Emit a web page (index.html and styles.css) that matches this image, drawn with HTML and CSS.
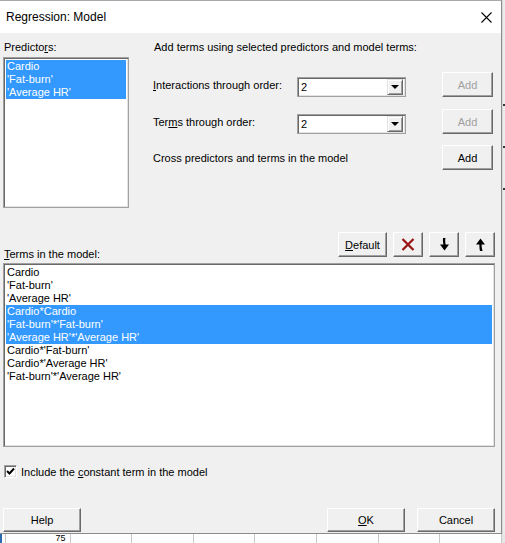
FILE: index.html
```html
<!DOCTYPE html>
<html lang="en">
<head>
    <meta charset="UTF-8">
    <title>Regression: Model</title>
    <link rel="stylesheet" href="styles.css">
</head>
<body>

<div class="screen">
    <div class="dialog">
        <div class="titlebar">
            <span class="title">Regression: Model</span>
            <svg class="close" width="11" height="11" viewBox="0 0 11 11">
                <path d="M0.5 0.5 L10.5 10.5 M10.5 0.5 L0.5 10.5" stroke="#000" stroke-width="1.1" fill="none"/>
            </svg>
        </div>

        <div class="content">
            <div class="top">
                <div class="pred">
                    <div class="caption">Predicto<u>r</u>s:</div>
                    <div class="listbox pred-list">
                        <div class="item selected">Cardio</div>
                        <div class="item selected">'Fat-burn'</div>
                        <div class="item selected">'Average HR'</div>
                    </div>
                </div>

                <div class="panel">
                    <div class="caption">Add terms using selected predictors and model terms:</div>
                    <div class="row row-first">
                        <span class="row-label"><u>I</u>nteractions through order:</span>
                        <div class="combo">
                            <span class="combo-value">2</span>
                            <span class="combo-btn"><i class="tri"></i></span>
                        </div>
                        <button class="btn btn-add" disabled>Add</button>
                    </div>
                    <div class="row row-second">
                        <span class="row-label">Ter<u>m</u>s through order:</span>
                        <div class="combo">
                            <span class="combo-value">2</span>
                            <span class="combo-btn"><i class="tri"></i></span>
                        </div>
                        <button class="btn btn-add" disabled>Add</button>
                    </div>
                    <div class="row row-third">
                        <span class="row-label">Cross predictors and terms in the model</span>
                        <button class="btn btn-add">Add</button>
                    </div>
                </div>
            </div>

            <div class="mid">
                <div class="caption"><u>T</u>erms in the model:</div>
                <div class="tools">
                    <button class="btn btn-default"><u>D</u>efault</button>
                    <button class="btn btn-icon">
                        <svg width="14" height="13" viewBox="0 0 14 13">
                            <path d="M1.5 1 L12.5 12 M12.5 1 L1.5 12" stroke="#9b1212" stroke-width="2.2" fill="none"/>
                        </svg>
                    </button>
                    <button class="btn btn-icon">
                        <svg width="11" height="13" viewBox="0 0 11 13">
                            <path d="M4 0 L6.5 0 C6 2 6.2 4 6.6 6.5 L10 6.5 L5.5 12.5 L1 6.5 L4.4 6.5 C4 4 3.8 2 4 0 Z" fill="#000"/>
                        </svg>
                    </button>
                    <button class="btn btn-icon">
                        <svg width="11" height="13" viewBox="0 0 11 13">
                            <path d="M5.5 0.5 L10 6.5 L6.6 6.5 C6.6 9 7 11 7.6 13 L5 13 C4.5 11 4.4 9 4.4 6.5 L1 6.5 Z" fill="#000"/>
                        </svg>
                    </button>
                </div>
            </div>

            <div class="listbox model-list">
                <div class="item">Cardio</div>
                <div class="item">'Fat-burn'</div>
                <div class="item">'Average HR'</div>
                <div class="item selected">Cardio*Cardio</div>
                <div class="item selected">'Fat-burn'*'Fat-burn'</div>
                <div class="item selected">'Average HR'*'Average HR'</div>
                <div class="item">Cardio*'Fat-burn'</div>
                <div class="item">Cardio*'Average HR'</div>
                <div class="item">'Fat-burn'*'Average HR'</div>
            </div>

            <div class="check-row">
                <span class="checkbox">
                    <svg width="9" height="9" viewBox="0 0 9 9">
                        <path d="M1 4 L3.5 6.5 L8 1.5" stroke="#000" stroke-width="2" fill="none"/>
                    </svg>
                </span>
                <span>Include the <u>c</u>onstant term in the model</span>
            </div>

            <div class="footer">
                <button class="btn btn-wide">Help</button>
                <div class="footer-right">
                    <button class="btn btn-wide"><u>O</u>K</button>
                    <button class="btn btn-wide">Cancel</button>
                </div>
            </div>
        </div>
    </div>

    <div class="edge">
        <i class="tick"></i>
        <i class="tick"></i>
        <i class="tick"></i>
    </div>

    <div class="sheet">
        <span class="cell cell-first">75</span>
        <span class="cell"></span>
        <span class="cell"></span>
        <span class="cell"></span>
        <span class="cell"></span>
        <span class="cell"></span>
        <span class="cell"></span>
        <span class="cell"></span>
    </div>
    <div class="sheet-corner"></div>
</div>

</body>
</html>
```

FILE: styles.css
```css
* {
    box-sizing: border-box;
}

body {
    margin: 0;
    font-family: "Liberation Sans", Arial, sans-serif;
    font-size: 11px;
    color: #000;
    background: #fff;
}

u {
    text-decoration: underline;
    text-underline-offset: 1px;
}

.screen {
    width: 505px;
    height: 543px;
    display: grid;
    grid-template-columns: 502px 3px;
    grid-template-rows: 534px 9px;
    overflow: hidden;
}

.dialog {
    background-color: #f0f0f0;
    border-top: 1px solid #a9a9a9;
    border-right: 1px solid #8c8c8c;
    border-bottom: 1px solid #8c8c8c;
    display: flex;
    flex-direction: column;
}

.titlebar {
    height: 32px;
    background-color: #fff;
    display: flex;
    align-items: center;
    justify-content: space-between;
    padding: 0 9px 0 6px;
    font-size: 12px;
}

.content {
    padding: 0 6px 0 3px;
}

.caption {
    line-height: 13px;
    padding-left: 1px;
}

/* top part */
.top {
    display: flex;
    padding-top: 8px;
}

.pred {
    width: 126px;
}

.listbox {
    background-color: #fff;
    border: 1px solid #a0a0a0;
    box-shadow: inset 1px 1px #696969, inset -1px -1px #e3e3e3;
    padding: 2px;
}

.pred-list {
    margin-top: 3px;
    height: 151px;
}

.item {
    line-height: 13px;
    height: 13px;
    padding-left: 1px;
    white-space: nowrap;
}

.item.selected {
    background-color: #3399ff;
    color: #fff;
}

.panel {
    margin-left: 24px;
    width: 340px;
}

.row {
    display: flex;
    align-items: center;
    height: 25px;
}

.row-first {
    margin-top: 18px;
}

.row-second {
    margin-top: 12px;
}

.row-third {
    margin-top: 11px;
}

.row-label {
    width: 144px;
}

.row-third .row-label {
    width: auto;
}

.combo {
    width: 109px;
    height: 20px;
    margin-top: 4px;
    background-color: #fff;
    border: 1px solid #a0a0a0;
    box-shadow: inset 1px 1px #696969, inset -1px -1px #e3e3e3;
    padding: 2px;
    display: flex;
    align-items: center;
}

.combo-value {
    flex: 1;
    padding-left: 1px;
}

.combo-btn {
    width: 16px;
    height: 16px;
    background-color: #f0f0f0;
    border: 1px solid;
    border-color: #e3e3e3 #696969 #696969 #e3e3e3;
    box-shadow: inset 1px 1px #fff, inset -1px -1px #a0a0a0;
    display: flex;
    align-items: center;
    justify-content: center;
}

.tri {
    width: 0;
    height: 0;
    border-left: 4px solid transparent;
    border-right: 4px solid transparent;
    border-top: 4px solid #000;
    margin-top: 1px;
}

/* buttons */
.btn {
    font-family: inherit;
    font-size: 11px;
    color: #000;
    background-color: #f0f0f0;
    border: 1px solid;
    border-color: #fff #696969 #696969 #fff;
    box-shadow: inset -1px -1px #a0a0a0;
    padding: 0;
    height: 25px;
    display: flex;
    align-items: center;
    justify-content: center;
}

.btn:disabled {
    color: #a0a0a0;
}

.btn-add {
    width: 51px;
    margin-left: auto;
}

/* middle part */
.mid {
    display: flex;
    justify-content: space-between;
    align-items: flex-end;
    margin-top: 24px;
    height: 29px;
}

.tools {
    display: flex;
    gap: 6px;
    margin-bottom: 4px;
}

.btn-default {
    width: 49px;
}

.btn-icon {
    width: 30px;
}

.model-list {
    margin-top: 2px;
    width: 492px;
    height: 184px;
}

/* checkbox */
.check-row {
    display: flex;
    align-items: center;
    gap: 4px;
    margin-top: 18px;
    height: 13px;
    padding-left: 1px;
}

.checkbox {
    width: 13px;
    height: 13px;
    background-color: #fff;
    border: 1px solid;
    border-color: #a0a0a0 #fff #fff #a0a0a0;
    box-shadow: inset 1px 1px #696969, inset -1px -1px #e3e3e3;
    display: flex;
    align-items: center;
    justify-content: center;
}

/* footer */
.footer {
    display: flex;
    justify-content: space-between;
    margin-top: 30px;
}

.footer-right {
    display: flex;
    gap: 12px;
}

.btn-wide {
    width: 78px;
    height: 24px;
}

/* what lies behind the dialog */
.edge {
    background-color: #ececec;
    border-left: 1px solid #d8d8d8;
    display: flex;
    flex-direction: column;
    gap: 40px;
    padding-top: 104px;
}

.tick {
    display: block;
    height: 2px;
    background-color: #333;
}

.sheet {
    display: flex;
    background-color: #fff;
    border-left: 2px solid #2b6cb0;
    overflow: hidden;
}

.cell {
    width: 62px;
    border-right: 1px solid #c8c8c8;
    font-size: 9px;
    line-height: 9px;
    text-align: right;
    padding-right: 4px;
}

.cell-first {
    width: 66px;
    border-left: 1px solid #c8c8c8;
    margin-left: 3px;
}

.sheet-corner {
    background-color: #e6e6e6;
}
```
